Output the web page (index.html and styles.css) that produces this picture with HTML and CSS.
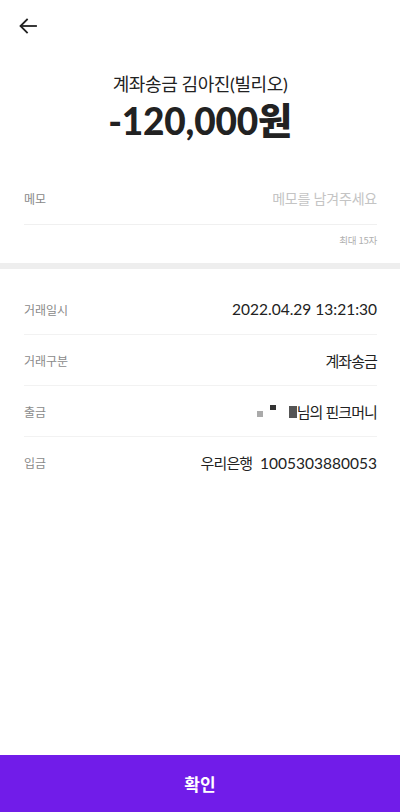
FILE: index.html
```html
<!DOCTYPE html>
<html lang="ko">
<head>
<meta charset="utf-8">
<link rel="stylesheet" href="styles.css">
</head>
<body>
<div class="page">
  <header class="topbar">
    <svg class="back" width="18" height="16" viewBox="0 0 18 16" fill="none" stroke="#222" stroke-width="1.8" stroke-linecap="square">
      <path d="M17 8H2"/>
      <path d="M8 1.5L1.5 8L8 14.5"/>
    </svg>
  </header>
  <section class="summary">
    <div class="title">계좌송금 김아진(빌리오)</div>
    <div class="amount">-120,000원</div>
  </section>
  <section class="memo">
    <div class="memo-row">
      <span class="label">메모</span>
      <span class="placeholder">메모를 남겨주세요</span>
    </div>
    <div class="limit">최대 15자</div>
  </section>
  <div class="band"></div>
  <section class="details">
    <div class="row"><span class="label">거래일시</span><span class="value">2022.04.29 13:21:30</span></div>
    <div class="row"><span class="label">거래구분</span><span class="value"><span class="ko">계좌송금</span></span></div>
    <div class="row"><span class="label">출금</span><span class="value"><span class="mask"><i class="m1"></i><i class="m2"></i><i class="m3"></i></span><span class="ko">님의 핀크머니</span></span></div>
    <div class="row last"><span class="label">입금</span><span class="value"><span class="ko">우리은행</span>&nbsp; 1005303880053</span></div>
  </section>
  <div class="spacer"></div>
  <button class="confirm">확인</button>
</div>
</body>
</html>
```

FILE: styles.css
```css
* { box-sizing: border-box; margin: 0; padding: 0; }
html, body { width: 400px; height: 812px; background: #fff; }
body { font-family: Lato, "Noto Sans CJK KR", sans-serif; color: #222; }
.page { display: flex; flex-direction: column; height: 812px; }
.topbar { height: 52px; display: flex; align-items: center; padding-left: 19px; }
.back { display: block; }
.summary { display: flex; flex-direction: column; align-items: center; padding-top: 19px; height: 122px; }
.title { font-size: 18px; line-height: 26px; color: #222; letter-spacing: -0.4px; }
.amount { font-size: 37px; font-weight: 900; line-height: 44px; margin-top: 2px; color: #222; letter-spacing: -0.2px; }
.memo { padding: 0 23px 0 24px; }
.memo-row { display: flex; justify-content: space-between; align-items: center; height: 51px; padding-bottom: 2px; border-bottom: 1px solid #f0f0f0; }
.memo-row .label { font-size: 12px; color: #888; }
.placeholder { font-size: 14px; color: #c4c4c4; letter-spacing: -0.2px; }
.limit { text-align: right; font-size: 9.5px; color: #b0b0b0; line-height: 14px; padding-top: 8px; height: 38px; font-family: "Noto Sans CJK KR", sans-serif; letter-spacing: -0.3px; }
.band { height: 6px; background: #eeeeee; }
.details { padding: 15px 23px 0 24px; }
.row { display: flex; justify-content: space-between; align-items: center; height: 51px; border-bottom: 1px solid #f2f2f2; }
.row.last { border-bottom: none; }
.row .label { font-size: 12px; color: #8a8a8a; }
.row .value { font-size: 15.5px; color: #222; display: flex; align-items: center; }
.ko { font-size: 15px; letter-spacing: -0.9px; }
.mask { position: relative; width: 40px; height: 14px; margin-right: 0; }
.mask i { position: absolute; display: block; }
.m1 { left: 0; top: 7px; width: 6px; height: 6px; background: #aaa; }
.m2 { left: 13px; top: 1px; width: 6px; height: 5px; background: #333; }
.m3 { left: 32px; top: 2px; width: 8px; height: 12px; background: #555; }
.spacer { flex: 1; }
.confirm { height: 57px; width: 100%; border: none; background: #711ce9; color: #fff; font-family: "Noto Sans CJK KR", sans-serif; font-size: 17px; font-weight: 700; }
```
